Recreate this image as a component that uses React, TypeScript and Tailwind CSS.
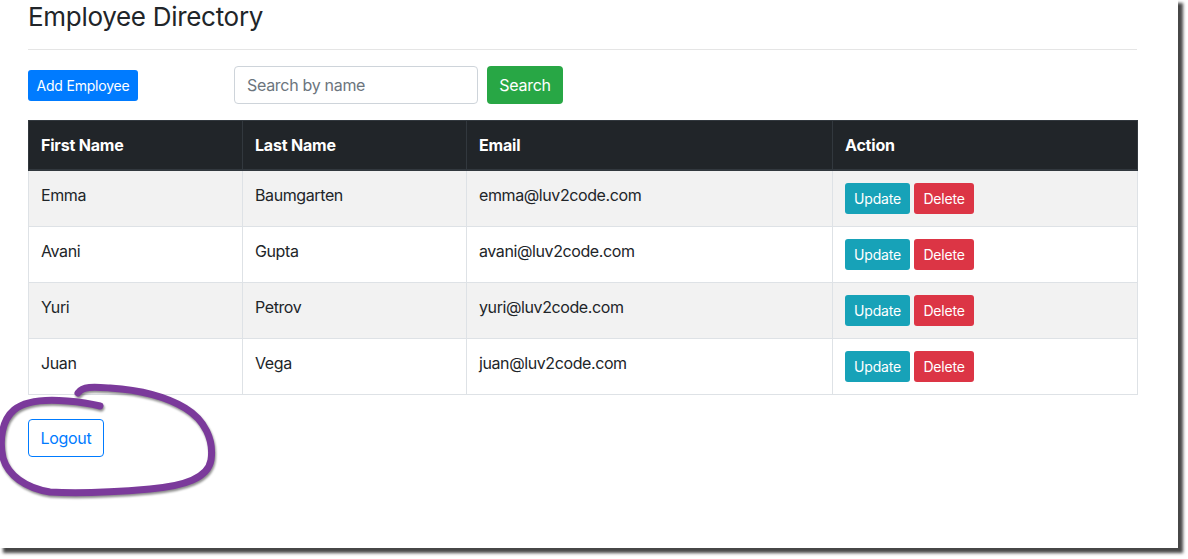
import React from "react";

type Employee = {
  firstName: string;
  lastName: string;
  email: string;
};

const EMPLOYEES: Employee[] = [
  { firstName: "Emma", lastName: "Baumgarten", email: "emma@luv2code.com" },
  { firstName: "Avani", lastName: "Gupta", email: "avani@luv2code.com" },
  { firstName: "Yuri", lastName: "Petrov", email: "yuri@luv2code.com" },
  { firstName: "Juan", lastName: "Vega", email: "juan@luv2code.com" },
];

const font = { fontFamily: "Inter, 'Noto Sans', 'Liberation Sans', sans-serif" };

export default function App() {
  return (
    <div className="min-h-screen bg-white" style={font}>
      <div className="relative w-[1178px] h-[548px] bg-white shadow-[4px_4px_3px_1px_rgba(0,0,0,0.72)] text-[#212529]">
        <div className="ml-[28px] w-[1109px]">
          <h3 className="text-[26px] leading-[34px] font-normal pt-0 tracking-[-0.3px]">
            Employee Directory
          </h3>
          <hr className="mt-[15px] border-0 border-t border-[#e5e5e5]" />

          <div className="mt-[16px] flex items-center h-[38px]">
            <button className="h-[31px] w-[110px] rounded-[3px] bg-[#007bff] text-white text-[14px] tracking-[-0.2px]">
              Add Employee
            </button>
            <input
              className="ml-[96px] h-[38px] w-[244px] rounded-[4px] border border-[#ced4da] px-[12px] text-[16px] tracking-[-0.3px] placeholder:text-[#6c757d] outline-none"
              placeholder="Search by name"
            />
            <button className="ml-[9px] h-[38px] w-[76px] rounded-[4px] bg-[#28a745] text-white text-[16px] tracking-[-0.3px]">
              Search
            </button>
          </div>

          <table className="mt-[16px] w-[1109px] border-collapse table-fixed text-[16px] tracking-[-0.4px]">
            <colgroup>
              <col className="w-[214px]" />
              <col className="w-[224px]" />
              <col className="w-[366px]" />
              <col className="w-[305px]" />
            </colgroup>
            <thead>
              <tr className="bg-[#212529] text-white">
                {["First Name", "Last Name", "Email", "Action"].map((h) => (
                  <th
                    key={h}
                    className="border border-[#32383e] border-b-2 px-[12px] py-[12px] h-[49px] text-left font-bold leading-[24px] tracking-[-0.2px]"
                  >
                    {h}
                  </th>
                ))}
              </tr>
            </thead>
            <tbody>
              {EMPLOYEES.map((e, i) => (
                <tr key={e.email} className={i % 2 === 0 ? "bg-[#f2f2f2]" : "bg-white"}>
                  <td className="border border-[#dee2e6] p-[12px] align-top leading-[24px] h-[56px]">
                    {e.firstName}
                  </td>
                  <td className="border border-[#dee2e6] p-[12px] align-top leading-[24px]">
                    {e.lastName}
                  </td>
                  <td className="border border-[#dee2e6] p-[12px] align-top leading-[24px]">
                    {e.email}
                  </td>
                  <td className="border border-[#dee2e6] p-[12px] align-top leading-[24px]">
                    <div className="flex gap-[4px] tracking-[-0.2px]">
                      <button className="h-[31px] w-[65px] rounded-[3px] bg-[#17a2b8] text-white text-[14px]">
                        Update
                      </button>
                      <button className="h-[31px] w-[60px] rounded-[3px] bg-[#dc3545] text-white text-[14px]">
                        Delete
                      </button>
                    </div>
                  </td>
                </tr>
              ))}
            </tbody>
          </table>

          <button className="mt-[24px] h-[38px] w-[76px] rounded-[4px] border border-[#007bff] text-[#007bff] text-[16px] tracking-[-0.3px]">
            Logout
          </button>
        </div>

        {/* hand-drawn highlight around logout */}
        <svg
          className="absolute left-0 top-0 pointer-events-none overflow-visible"
          width="240"
          height="520"
          style={{ filter: "drop-shadow(1px 2px 1px rgba(0,0,0,0.45))" }}
        >
          <path
            d="M 78 393 C 83 386, 94 387, 110 388 C 140 390, 165 396, 185 408 C 205 420, 214 440, 211 460 C 208 478, 185 486, 150 489 C 115 492, 80 494, 50 492 C 25 488, 8 475, 3 458 C -1 440, 2 420, 14 410 C 25 401, 45 399, 67 401 C 80 402, 92 404, 100 406"
            fill="none"
            stroke="#7b3a9b"
            strokeWidth="7"
            strokeLinecap="round"
            strokeLinejoin="round"
          />
        </svg>
      </div>
    </div>
  );
}
